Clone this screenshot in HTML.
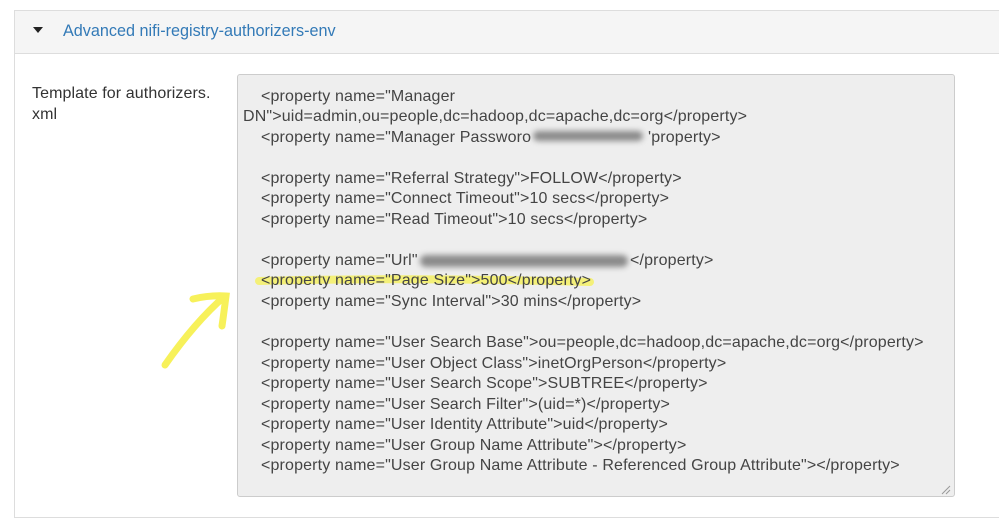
<!DOCTYPE html>
<html><head><meta charset="utf-8"><style>
html,body{margin:0;padding:0;background:#fff;width:999px;height:525px;overflow:hidden;font-family:"Liberation Sans",Arial,sans-serif;}
.panel{position:absolute;left:14px;top:10px;width:1000px;height:508px;border:1px solid #ddd;box-sizing:border-box;}
.head{position:absolute;left:0;top:0;right:0;height:42px;background:#f5f5f5;border-bottom:1px solid #ddd;}
.caret{position:absolute;left:18px;top:16px;width:0;height:0;border-left:5px solid transparent;border-right:5px solid transparent;border-top:6px solid #222;}
.title{position:absolute;left:48px;top:11px;font-size:16.2px;color:#337ab7;}
.label{position:absolute;left:32px;top:84px;font-size:16px;line-height:20.5px;color:#333;letter-spacing:0.1px;}
.ta{position:absolute;left:237px;top:74px;width:718px;height:423px;box-sizing:border-box;background:#eee;border:1px solid #ccc;border-radius:3px;}
.l{position:absolute;left:261px;font-size:16px;line-height:20px;color:#444;white-space:pre;letter-spacing:0.15px;}
.blur{position:absolute;background:#8a8a8a;filter:blur(3px);border-radius:6px;}
</style></head><body>
<div class="panel"><div class="head"><div class="caret"></div><div class="title">Advanced nifi-registry-authorizers-env</div></div></div>
<div class="label">Template for authorizers.<br>xml</div>
<div class="ta"></div>
<svg style="position:absolute;left:0;top:0" width="999" height="525">
<path d="M259 281 Q420 277 590 282" stroke="#f4f06a" stroke-width="8" fill="none" stroke-linecap="round" opacity="0.9"/>
<path d="M165 365 Q195 322 225 296" stroke="#f7f15a" stroke-width="7" fill="none" stroke-linecap="round"/>
<path d="M193 299 Q210 295 226 296 Q224 312 222 326" stroke="#f7f15a" stroke-width="7" fill="none" stroke-linecap="round"/>
</svg>
<div class="l" style="top:87px">&lt;property name="Manager</div>
<div class="l" style="top:107px;left:243px">DN"&gt;uid=admin,ou=people,dc=hadoop,dc=apache,dc=org&lt;/property&gt;</div>
<div class="l" style="top:128px">&lt;property name="Manager Passworo</div>
<div class="l" style="top:128px;left:648px">'property&gt;</div>
<div class="l" style="top:169px">&lt;property name="Referral Strategy"&gt;FOLLOW&lt;/property&gt;</div>
<div class="l" style="top:189px">&lt;property name="Connect Timeout"&gt;10 secs&lt;/property&gt;</div>
<div class="l" style="top:210px">&lt;property name="Read Timeout"&gt;10 secs&lt;/property&gt;</div>
<div class="l" style="top:251px">&lt;property name="Url"</div>
<div class="l" style="top:251px;left:630px">&lt;/property&gt;</div>
<div class="l" style="top:271px">&lt;property name="Page Size"&gt;500&lt;/property&gt;</div>
<div class="l" style="top:292px">&lt;property name="Sync Interval"&gt;30 mins&lt;/property&gt;</div>
<div class="l" style="top:333px">&lt;property name="User Search Base"&gt;ou=people,dc=hadoop,dc=apache,dc=org&lt;/property&gt;</div>
<div class="l" style="top:354px">&lt;property name="User Object Class"&gt;inetOrgPerson&lt;/property&gt;</div>
<div class="l" style="top:374px">&lt;property name="User Search Scope"&gt;SUBTREE&lt;/property&gt;</div>
<div class="l" style="top:395px">&lt;property name="User Search Filter"&gt;(uid=*)&lt;/property&gt;</div>
<div class="l" style="top:415px">&lt;property name="User Identity Attribute"&gt;uid&lt;/property&gt;</div>
<div class="l" style="top:436px">&lt;property name="User Group Name Attribute"&gt;&lt;/property&gt;</div>
<div class="l" style="top:456px">&lt;property name="User Group Name Attribute - Referenced Group Attribute"&gt;&lt;/property&gt;</div>
<div class="blur" style="left:533px;top:131px;width:110px;height:10px;"></div>
<div class="blur" style="left:420px;top:255px;width:208px;height:12px;"></div>
<svg style="position:absolute;left:940px;top:484px" width="12" height="12"><path d="M2 10 L10 2 M6 10 L10 6" stroke="#999" stroke-width="1"/></svg>
</body></html>
